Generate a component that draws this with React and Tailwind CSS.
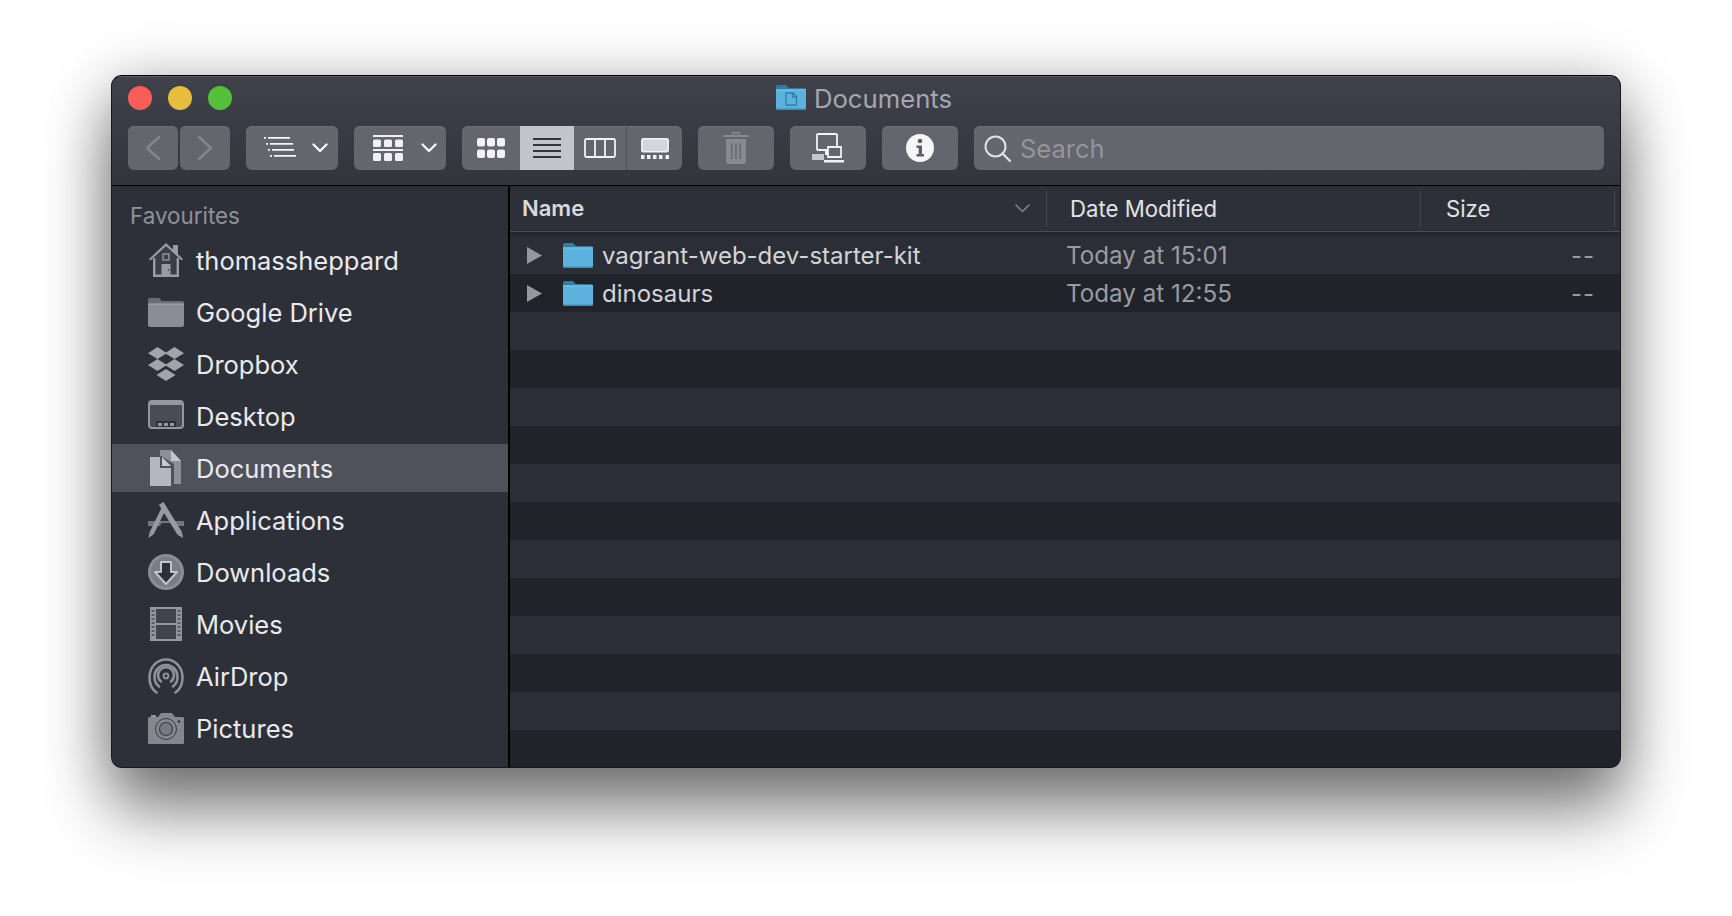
import React from "react";

const sideIconColor = "#8f919a";

function HomeIcon() {
  return (
    <svg width="36" height="36" viewBox="0 0 36 36">
      <path d="M1 17 18 1l7 6.500V3h5v9.200L35 17l-1.400 1.600L18 4.200 2.400 18.600z" fill="#9a9ca5" />
      <path d="M5 16.500 18 4.500l13 12V35H5z" fill="#3c3e47" />
      <path d="M5 16v19h26V16h-2.400v16.600H7.400V16z" fill="#9a9ca5" />
      <path d="M13.500 22h9v11h-9z" fill="#9a9ca5" />
      <circle cx="20.500" cy="28" r=".8" fill="#2e3039" />
      <rect x="15" y="12" width="6" height="6" fill="none" stroke="#9a9ca5" strokeWidth="1.300" />
    </svg>
  );
}

function DriveFolderIcon() {
  return (
    <svg width="36" height="36" viewBox="0 0 36 36">
      <path d="M0 6a2 2 0 0 1 2-2h9l3 3h20a2 2 0 0 1 2 2v2H0z" fill="#6b6d76" />
      <path d="M0 10h36v21a2 2 0 0 1-2 2H2a2 2 0 0 1-2-2z" fill="#8b8d96" />
      <path d="M0 9.600h36v1.200H0z" fill="#a3a5ad" />
    </svg>
  );
}

function DropboxIcon() {
  return (
    <svg width="36" height="36" viewBox="0 0 36 36" fill="#a2a4ac">
      <path d="M9.500 1 19 7.200 9.500 13 0 7.200z" />
      <path d="M26.500 1 36 7.200 26.500 13 17 7.200z" />
      <path d="M9.500 13 19 19 9.500 25 0 19z" />
      <path d="M26.500 13 36 19l-9.500 6L17 19z" />
      <path d="M18 23l9.500 6L18 35l-9.500-6z" />
    </svg>
  );
}

function DesktopIcon() {
  return (
    <svg width="36" height="36" viewBox="0 0 36 36">
      <rect x="1" y="3" width="34" height="27" rx="3" fill="#4a4c55" stroke="#9597a0" strokeWidth="2" />
      <path d="M2 6a2 2 0 0 1 2-2h28a2 2 0 0 1 2 2v1H2z" fill="#9597a0" />
      <path d="M8 23h20v6H8z" fill="#2e3039" />
      <path d="M10 25h4v3h-4zM16 25h4v3h-4zM22 25h4v3h-4z" fill="#9597a0" />
    </svg>
  );
}

function DocumentsIcon() {
  return (
    <svg width="36" height="36" viewBox="0 0 36 36">
      <path d="M12 0h11l10 11v23h-7V14L13 6h-1z" fill="#8e9099" />
      <path d="M23 0l10 11H23z" fill="#c2c4cc" />
      <path d="M2 7h10v11h11v18H2z" fill="#b5b7c0" />
      <path d="M14 7l9 9h-9z" fill="#c8cad2" />
    </svg>
  );
}

function ApplicationsIcon() {
  return (
    <svg width="36" height="36" viewBox="0 0 36 36">
      <path d="M0 19h36v5H0z" fill="#73757e" />
      <path d="M15.500 0 34 30l-4.500 2.800L11 2.800z" fill="#989aa3" />
      <path d="M17.500 8 5.500 32.500 1.500 30.500 14 5z" fill="#989aa3" />
      <path d="M0.500 36 1.500 30.500l4 2zM35 36l-1-6-4.500 2.800z" fill="#989aa3" />
      <path d="M12 24h12l-1.800-3H13.500z" fill="#2e3039" />
    </svg>
  );
}

function DownloadsIcon() {
  return (
    <svg width="36" height="36" viewBox="0 0 36 36">
      <circle cx="18" cy="18" r="18" fill="#8b8d96" />
      <circle cx="18" cy="18" r="15" fill="#7b7d86" />
      <path d="M13 8h10v10h6L18 30 7 18h6z" fill="#2e3039" stroke="#c2c4cc" strokeWidth="2" strokeLinejoin="round" />
    </svg>
  );
}

function MoviesIcon() {
  return (
    <svg width="36" height="36" viewBox="0 0 36 36">
      <rect x="2" y="1" width="32" height="34" fill="#9496a0" />
      <path d="M8 3h20v14H8zM8 19h20v14H8z" fill="#41434c" />
      <path d="M3.500 4h3v2h-3zM3.500 8h3v2h-3zM3.500 12h3v2h-3zM3.500 16h3v2h-3zM3.500 20h3v2h-3zM3.500 24h3v2h-3zM3.500 28h3v2h-3zM29.500 4h3v2h-3zM29.500 8h3v2h-3zM29.500 12h3v2h-3zM29.500 16h3v2h-3zM29.500 20h3v2h-3zM29.500 24h3v2h-3zM29.500 28h3v2h-3z" fill="#5a5c65" />
    </svg>
  );
}

function AirDropIcon() {
  return (
    <svg width="36" height="36" viewBox="0 0 36 36" fill="none" stroke={sideIconColor} strokeLinecap="round">
      <path d="M8.500 34.500C3.800 31.200 1.500 25.600 1.500 19.500 1.500 9.500 8.500 1.500 18 1.500s16.500 8 16.500 18c0 6.100-2.300 11.700-7 15" strokeWidth="2.600" />
      <path d="M11 28.500C8 26.200 6.500 22.800 6.500 19 6.500 12.300 11.500 7 18 7s11.500 5.300 11.500 12c0 3.800-1.500 7.200-4.500 9.500" strokeWidth="2.600" />
      <path d="M13 23.500a8 8 0 1 1 10 0" strokeWidth="2.600" />
      <circle cx="18" cy="18" r="2.400" strokeWidth="2" />
    </svg>
  );
}

function PicturesIcon() {
  return (
    <svg width="36" height="36" viewBox="0 0 36 36">
      <path d="M3 5h5v2H3z" fill="#9496a0" />
      <path d="M1.500 7H10l3-4h11l3 4h7.500A1.500 1.500 0 0 1 36 8.500v24a1.500 1.500 0 0 1-1.500 1.500h-33A1.500 1.500 0 0 1 0 32.500v-24A1.500 1.500 0 0 1 1.500 7z" fill="#85878f" />
      <circle cx="18" cy="19" r="10.500" fill="none" stroke="#3a3c45" strokeWidth="1" />
      <circle cx="18" cy="19" r="6.500" fill="#777983" stroke="#3a3c45" strokeWidth="1.200" />
      <circle cx="31" cy="11.500" r="1.300" fill="#2e3039" />
    </svg>
  );
}

function FolderBlue({ doc }) {
  return (
    <svg width="30" height="25" viewBox="0 0 30 25">
      <path d="M0 2a2 2 0 0 1 2-2h8l3 3h15a2 2 0 0 1 2 2v3H0z" fill="#39799c" />
      <path d="M0 5h30v18a2 2 0 0 1-2 2H2a2 2 0 0 1-2-2z" fill="#5cb2dc" />
      <path d="M0 4.200h30v1.200H0z" fill="#7cc6e8" />
      <path d="M0 23.500h30V23a2 2 0 0 1-2 2H2a2 2 0 0 1-2-2z" fill="#3f8db6" />
      {doc && <path d="M10 8h7l3.500 3.500V20H10zM16.500 8.500v3.500h3.500" fill="none" stroke="#2f7fae" strokeWidth="1.300" />}
    </svg>
  );
}

function Chevron() {
  return (
    <svg width="16" height="10" viewBox="0 0 16 10" fill="none" stroke="#f6f6f9" strokeWidth="2.400" strokeLinecap="round" strokeLinejoin="round">
      <path d="M1.500 1.500 8 8l6.500-6.500" />
    </svg>
  );
}

function ListArrange() {
  return (
    <svg width="32" height="22" viewBox="0 0 32 22" fill="#f6f6f9">
      <path d="M0 0h2v1.800H0zM4 0h22v1.800H4zM2 6h2v1.800H2zM6 6h23v1.800H6zM4 12h2v1.800H4zM8 12h22v1.800H8zM6 18h2v1.800H6zM10 18h22v1.800H10z" />
    </svg>
  );
}

function GalleryArrange() {
  return (
    <svg width="30" height="26" viewBox="0 0 30 26" fill="#f0f0f4">
      <path d="M0 0h30v2H0zM0 14h30v2H0z" />
      <rect x="0" y="4.500" width="8" height="7.500" rx="1.500" />
      <rect x="11" y="4.500" width="8" height="7.500" rx="1.500" />
      <rect x="22" y="4.500" width="8" height="7.500" rx="1.500" />
      <rect x="0" y="18" width="8" height="8" rx="1.500" />
      <rect x="11" y="18" width="8" height="8" rx="1.500" />
      <rect x="22" y="18" width="8" height="8" rx="1.500" />
    </svg>
  );
}

function IconsView() {
  return (
    <svg width="28" height="20" viewBox="0 0 28 20" fill="#f2f2f6">
      <rect x="0" y="0" width="8" height="8.500" rx="2" />
      <rect x="10" y="0" width="8" height="8.500" rx="2" />
      <rect x="20" y="0" width="8" height="8.500" rx="2" />
      <rect x="0" y="11.500" width="8" height="8.500" rx="2" />
      <rect x="10" y="11.500" width="8" height="8.500" rx="2" />
      <rect x="20" y="11.500" width="8" height="8.500" rx="2" />
    </svg>
  );
}

function ListView() {
  return (
    <svg width="28" height="20" viewBox="0 0 28 20" fill="#33353d">
      <path d="M0 0h28v2H0zM0 6h28v2H0zM0 12h28v2H0zM0 18h28v2H0z" />
    </svg>
  );
}

function ColumnView() {
  return (
    <svg width="32" height="20" viewBox="0 0 32 20" fill="none" stroke="#f2f2f6" strokeWidth="1.800">
      <rect x="1" y="1" width="30" height="18" rx="1.500" />
      <path d="M11 1v18M21 1v18" />
    </svg>
  );
}

function CoverView() {
  return (
    <svg width="28" height="21" viewBox="0 0 28 21" fill="#f2f2f6">
      <rect x=".8" y=".8" width="26.400" height="13" rx="1.500" fill="#d5d6dc" stroke="#f2f2f6" strokeWidth="1.500" />
      <path d="M0 17h3.500v4H0zM6 17h3.500v4H6zM12 17h3.500v4H12zM18 17h3.500v4H18zM24.500 17H28v4h-3.500z" />
    </svg>
  );
}

function TrashIcon() {
  return (
    <svg width="26" height="32" viewBox="0 0 26 32" fill="#888991">
      <path fillRule="evenodd" d="M9 3V2a2 2 0 0 1 2-2h4a2 2 0 0 1 2 2v1h9v2H0V3zM10.500 3h5V1.500h-5z" />
      <path d="M3 7h20v22a3 3 0 0 1-3 3H6a3 3 0 0 1-3-3z" />
      <path d="M8 11h1.500v16H8zM12.200 11h1.500v16h-1.500zM16.500 11H18v16h-1.500z" fill="#666770" />
    </svg>
  );
}

function NetworkIcon() {
  return (
    <svg width="32" height="30" viewBox="0 0 32 30">
      <rect x="5" y="1" width="20" height="16" rx="1" fill="none" stroke="#f2f2f6" strokeWidth="1.800" />
      <path d="M13 17h3v5h-3z" fill="#f2f2f6" />
      <path d="M0 21h12v6H0z" fill="#c6c7cd" />
      <path d="M16 14h13v10H16z" fill="#64656d" stroke="#f2f2f6" strokeWidth="1.800" />
      <path d="M12 27h20v2.500H12z" fill="#f2f2f6" />
    </svg>
  );
}

function InfoIcon() {
  return (
    <svg width="28" height="28" viewBox="0 0 28 28">
      <circle cx="14" cy="14" r="14" fill="#f6f6f9" />
      <circle cx="14" cy="7" r="2.300" fill="#5c5d65" />
      <path d="M10.500 11.500H16V20h2v2.500H10.500V20h2.200v-6h-2.200z" fill="#5c5d65" />
    </svg>
  );
}

function SearchIcon() {
  return (
    <svg width="27" height="27" viewBox="0 0 27 27" fill="none" stroke="#e0e1e6" strokeWidth="2">
      <circle cx="11.500" cy="11.500" r="10" />
      <path d="M18.500 18.500 26 26" strokeLinecap="round" strokeWidth="2.300" />
    </svg>
  );
}

const places = [
  { name: "thomassheppard", icon: <HomeIcon /> },
  { name: "Google Drive", icon: <DriveFolderIcon /> },
  { name: "Dropbox", icon: <DropboxIcon /> },
  { name: "Desktop", icon: <DesktopIcon /> },
  { name: "Documents", icon: <DocumentsIcon />, active: true },
  { name: "Applications", icon: <ApplicationsIcon /> },
  { name: "Downloads", icon: <DownloadsIcon /> },
  { name: "Movies", icon: <MoviesIcon /> },
  { name: "AirDrop", icon: <AirDropIcon /> },
  { name: "Pictures", icon: <PicturesIcon /> },
];

const files = [
  { name: "vagrant-web-dev-starter-kit", date: "Today at 15:01" },
  { name: "dinosaurs", date: "Today at 12:55" },
];

const stripes = Array.from({ length: 12 }, (_, i) => i + 2);

const btn = "h-[44px] rounded-[6px] bg-[#64656d] shadow-[inset_0_1px_0_#6e6f77] flex items-center justify-center";

export default function App() {
  return (
    <div className="w-[1732px] h-[916px] bg-white overflow-hidden pt-[75px] pl-[111px] font-['Inter','Noto_Sans',sans-serif]">
      <div className="w-[1510px] h-[693px] flex flex-col rounded-[11px] overflow-hidden border border-[#17181c] border-t-black bg-[#2e3039] shadow-[0_44px_66px_rgba(0,0,0,0.46),0_6px_60px_rgba(0,0,0,0.28)]">
        {/* Title bar + toolbar */}
        <div className="h-[110px] shrink-0 border-b border-black bg-gradient-to-b from-[#3f414b] to-[#33353d] shadow-[inset_0_1px_0_#5d5e66] pl-[16px] pr-[16px]">
          <div className="relative h-[44px] flex items-center justify-center">
            <div className="absolute left-0 top-[10px] flex gap-[16px]">
              <span className="w-[24px] h-[24px] rounded-full bg-[#fb5d57]" />
              <span className="w-[24px] h-[24px] rounded-full bg-[#e6bd3c]" />
              <span className="w-[24px] h-[24px] rounded-full bg-[#56c03b]" />
            </div>
            <div className="flex items-center gap-[8px] mr-[4px]">
              <FolderBlue doc />
              <span className="text-[25.700px] text-[#a5a6b1] leading-none pt-[2px]">Documents</span>
            </div>
          </div>

          <div className="mt-[6px] flex gap-[16px]">
            <div className="flex gap-[2px]">
              <div className={`${btn} w-[50px] bg-[#595a62]`}>
                <svg width="16" height="26" viewBox="0 0 16 26" fill="none" stroke="#84858d" strokeWidth="2.500" strokeLinecap="round" strokeLinejoin="round">
                  <path d="M14 2 2 13l12 11" />
                </svg>
              </div>
              <div className={`${btn} w-[50px] bg-[#595a62]`}>
                <svg width="16" height="26" viewBox="0 0 16 26" fill="none" stroke="#84858d" strokeWidth="2.500" strokeLinecap="round" strokeLinejoin="round">
                  <path d="m2 2 12 11L2 24" />
                </svg>
              </div>
            </div>
            <div className={`${btn} w-[92px] gap-[16px] pl-[8px]`}>
              <ListArrange />
              <Chevron />
            </div>
            <div className={`${btn} w-[92px] gap-[18px] pl-[9px]`}>
              <GalleryArrange />
              <Chevron />
            </div>

            <div className={`${btn} w-[220px] overflow-hidden justify-start`}>
              <div className="w-[58px] flex justify-center"><IconsView /></div>
              <div className="w-[54px] h-full bg-[#c3c4cc] flex items-center justify-center"><ListView /></div>
              <div className="w-[53px] h-full border-r border-[#51525a] flex items-center justify-center"><ColumnView /></div>
              <div className="flex-1 flex justify-center"><CoverView /></div>
            </div>

            <div className={`${btn} w-[76px]`}><TrashIcon /></div>
            <div className={`${btn} w-[76px]`}><NetworkIcon /></div>
            <div className={`${btn} w-[76px]`}><InfoIcon /></div>

            <div className={`${btn} flex-1 justify-start pl-[10px] gap-[9px]`}>
              <SearchIcon />
              <span className="text-[25.500px] text-[#93949c] leading-none pt-[2px]">Search</span>
            </div>
          </div>
        </div>

        <div className="flex-1 flex min-h-0">
          {/* Sidebar */}
          <aside className="w-[398px] shrink-0 border-r-2 border-black bg-[#2e3039]">
            <div className="mt-[10px] h-[40px] pl-[18px] flex items-center text-[22.400px] text-[#8e9099]">Favourites</div>
            <div className="flex flex-col gap-[4px]">
              {places.map((p) => (
                <div
                  key={p.name}
                  className={`h-[48px] flex items-center gap-[12px] pl-[36px] text-[25.500px] text-[#eaeaee] ${p.active ? "bg-[#50525b]" : ""}`}
                >
                  {p.icon}
                  <span className="pt-[3px]">{p.name}</span>
                </div>
              ))}
            </div>
          </aside>

          {/* File list */}
          <main className="flex-1 min-w-0 flex flex-col">
            <div className="h-[46px] shrink-0 flex items-center text-[22.200px] text-[#e2e2e6] border-b border-[#4a4c55]">
              <div className="w-[537px] h-[36px] pl-[12px] pr-[16px] flex items-center justify-between border-r border-[#43454e]">
                <span className="font-semibold text-[22px] text-[#d8d9dd]">Name</span>
                <svg width="15" height="9" viewBox="0 0 15 9" fill="none" stroke="#7f8089" strokeWidth="1.600" strokeLinecap="round" strokeLinejoin="round">
                  <path d="m1 1 6.500 6.500L14 1" />
                </svg>
              </div>
              <div className="w-[374px] h-[36px] pl-[23px] flex items-center border-r border-[#43454e]">Date Modified</div>
              <div className="w-[194px] h-[36px] pl-[25px] flex items-center border-r border-[#43454e]">Size</div>
            </div>
            <div className="h-[4px] shrink-0 bg-[#25272f]" />
            <div className="flex-1 overflow-hidden">
              {files.map((f, i) => (
                <div key={f.name} className={`h-[38px] flex items-center text-[24px] ${i % 2 === 0 ? "bg-[#2c2e37]" : "bg-[#21232b]"}`}>
                  <div className="w-[556px] flex items-center pl-[17px] shrink-0">
                    <svg width="15" height="17" viewBox="0 0 15 17" fill="#96979e"><path d="M0 0 15 8.500 0 17z" /></svg>
                    <span className="ml-[21px]"><FolderBlue /></span>
                    <span className="ml-[9px] text-[#d3d4d9] pt-[2px] whitespace-nowrap">{f.name}</span>
                  </div>
                  <div className="w-[497px] shrink-0 text-[#9a9ba2] pt-[2px] text-[24.200px] whitespace-nowrap">{f.date}</div>
                  <div className="w-[32px] text-right text-[#9a9ba2] tracking-[1px] whitespace-nowrap pt-[2px]">--</div>
                </div>
              ))}
              {stripes.map((n) => (
                <div key={n} className={`h-[38px] ${n % 2 === 0 ? "bg-[#2c2e37]" : "bg-[#21232b]"}`} />
              ))}
            </div>
          </main>
        </div>
      </div>
    </div>
  );
}
